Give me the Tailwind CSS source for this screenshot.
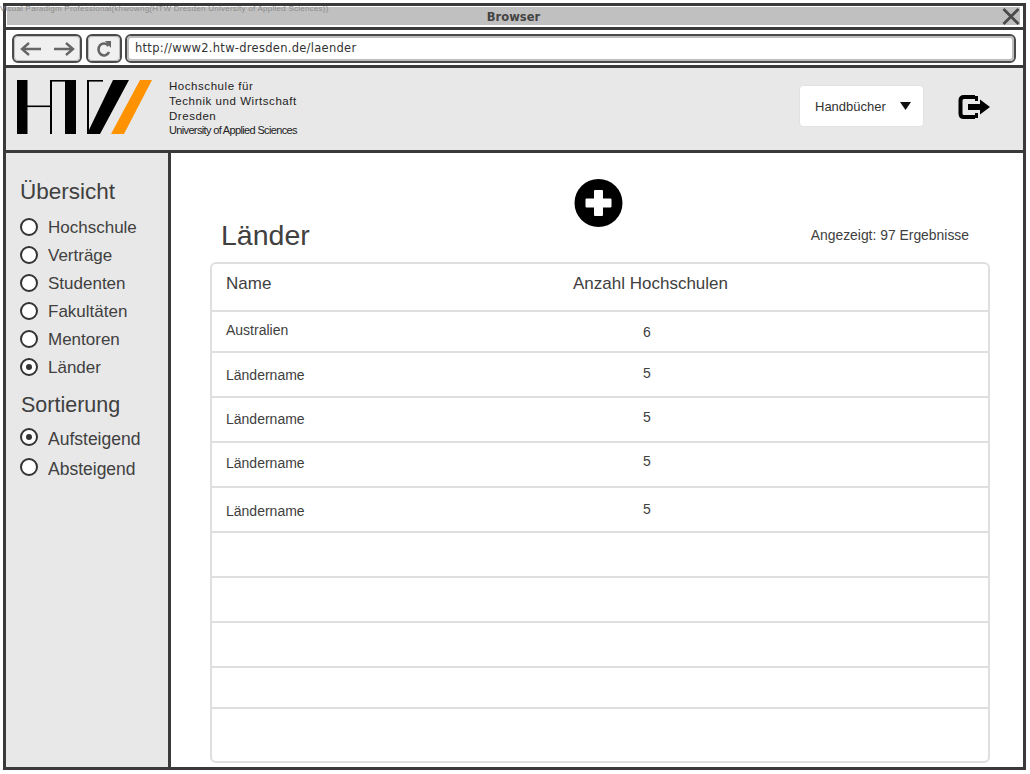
<!DOCTYPE html>
<html lang="de">
  <head>
    <meta charset="UTF-8" />
    <title>Browser</title>
    <script src="https://cdn.jsdelivr.net/npm/@tailwindcss/browser@4"></script>
  </head>
  <body class="bg-white font-['Liberation_Sans',Arial,sans-serif] text-[#404040]">
    <div class="relative w-[1030px] h-[774px] pt-[3px] pl-[3px] overflow-hidden">
      <!-- watermark over the title bar -->
      <p class="absolute z-10 left-[0px] top-[4px] text-[8px] leading-[9px] tracking-[0.25px] text-[#8c8c8c] whitespace-nowrap">Visual Paradigm Professional(khwowng(HTW Dresden University of Applied Sciences))</p>

      <div class="w-[1023px] h-[767px] border-[3px] border-[#3a3a3a] flex flex-col bg-white">
        <!-- title bar -->
        <div class="h-[24px] shrink-0 border-b-[3px] border-[#3a3a3a] pt-[1px] pb-[2px] pl-[1px] pr-[3px]">
          <div class="relative h-[18px] bg-[#c0c0c0] flex items-center justify-center pt-[3px]">
            <span class="font-['DejaVu_Sans',sans-serif] text-[11.5px] font-bold text-[#444]">Browser</span>
            <svg class="absolute right-[0px] top-[1px]" width="18" height="17" viewBox="0 0 18 17"><path d="M1.5 1 L16.5 16 M16.5 1 L1.5 16" stroke="#4a4a4a" stroke-width="2.8" fill="none"/></svg>
          </div>
        </div>

        <!-- toolbar -->
        <div class="h-[38px] shrink-0 border-b-[3px] border-[#3a3a3a] flex items-center pl-[6px] pr-[7px] pt-[2px]">
          <div class="w-[70px] h-[29px] rounded-[6px] border-2 border-[#4a4a4a] outline outline-1 -outline-offset-3 outline-[#bdbdbd] bg-[#f0f0f0] flex items-center justify-center gap-[9px]">
            <svg width="24" height="16" viewBox="0 0 24 16"><path d="M22 8 H3 M10 2 L3 8 L10 14" stroke="#666" stroke-width="2.4" fill="none"/></svg>
            <svg width="24" height="16" viewBox="0 0 24 16"><path d="M2 8 H21 M14 2 L21 8 L14 14" stroke="#666" stroke-width="2.4" fill="none"/></svg>
          </div>
          <div class="ml-[4px] w-[36px] h-[29px] rounded-[6px] border-2 border-[#4a4a4a] outline outline-1 -outline-offset-3 outline-[#bdbdbd] bg-[#f0f0f0] flex items-center justify-center">
            <svg width="16" height="18" viewBox="0 0 16 18"><path d="M12.5 6 A5.5 6 0 1 0 13 12" stroke="#666" stroke-width="2.6" fill="none"/><path d="M9 1 L15 1 L15 8 Z" fill="#666"/></svg>
          </div>
          <div class="ml-[3px] flex-1 h-[29px] rounded-[6px] border-2 border-[#4a4a4a] outline outline-2 -outline-offset-4 outline-[#bdbdbd] bg-white flex items-center pl-[8px] pt-[1px] font-['DejaVu_Sans',sans-serif] text-[11.5px] tracking-[0.28px] text-[#333]">http://www2.htw-dresden.de/laender</div>
        </div>

        <!-- header -->
        <div class="h-[85px] shrink-0 border-b-[3px] border-[#3a3a3a] bg-[#e8e8e8] flex items-center pl-[11px] pr-[32px] pb-[4px]">
          <svg class="shrink-0" width="136" height="54" viewBox="0 0 136 54">
            <rect x="0" y="0" width="10.5" height="54" fill="#000"/>
            <rect x="10" y="25.5" width="24" height="1.6" fill="#000"/>
            <rect x="33" y="0" width="2" height="54" fill="#000"/>
            <rect x="33" y="0" width="26" height="1.6" fill="#000"/>
            <rect x="48" y="0" width="11" height="54" fill="#000"/>
            <rect x="70" y="0" width="2" height="54" fill="#000"/>
            <rect x="70" y="0" width="16" height="1.6" fill="#000"/>
            <path d="M96 0 H112 L83 54 H70 Z" fill="#000"/>
            <path d="M123 0 H135 L107 54 H94 Z" fill="#ff9200"/>
          </svg>
          <div class="ml-[16px] text-[#222] leading-[14.7px] text-[11.5px] tracking-[0.55px] pt-[3px]">
            <p>Hochschule für</p>
            <p>Technik und Wirtschaft</p>
            <p>Dresden</p>
            <p class="text-[11px] tracking-[-0.65px]">University of Applied Sciences</p>
          </div>
          <div class="ml-auto mb-[2px] w-[125px] h-[42px] rounded-[4px] bg-white border border-[#e2e2e2] flex items-center pl-[15px] pt-[2px] text-[13px] text-[#333]">
            Handbücher
            <svg class="ml-[14px] -mt-[2px]" width="11" height="8" viewBox="0 0 11 8"><path d="M0 0 H11 L5.5 8 Z" fill="#111"/></svg>
          </div>
          <svg class="ml-[34px]" width="33" height="26" viewBox="0 0 33 26">
            <path d="M17 3 H6 Q2.5 3 2.5 6.5 V19.5 Q2.5 23 6 23 H17" stroke="#000" stroke-width="4" fill="none"/>
            <path d="M17 2 H20 V7 H17 Z M17 19 H20 V24 H17 Z" fill="#000"/>
            <path d="M10 10 H22 V5.5 L32 13 L22 20.5 V16 H10 Z" fill="#000"/>
          </svg>
        </div>

        <div class="flex-1 min-h-0 flex">
          <!-- sidebar -->
          <aside class="w-[165px] shrink-0 border-r-[3px] border-[#3a3a3a] bg-[#e8e8e8] pl-[14px] pt-[26px]">
            <h2 class="text-[22.5px] leading-[26px]">Übersicht</h2>
            <ul class="mt-[9px] text-[17px]">
              <li class="h-[28px] flex items-center gap-[10px]"><span class="w-[18px] h-[18px] -mt-[3px] rounded-full border-2 border-[#333] bg-white"></span>Hochschule</li>
              <li class="h-[28px] flex items-center gap-[10px]"><span class="w-[18px] h-[18px] -mt-[3px] rounded-full border-2 border-[#333] bg-white"></span>Verträge</li>
              <li class="h-[28px] flex items-center gap-[10px]"><span class="w-[18px] h-[18px] -mt-[3px] rounded-full border-2 border-[#333] bg-white"></span>Studenten</li>
              <li class="h-[28px] flex items-center gap-[10px]"><span class="w-[18px] h-[18px] -mt-[3px] rounded-full border-2 border-[#333] bg-white"></span>Fakultäten</li>
              <li class="h-[28px] flex items-center gap-[10px]"><span class="w-[18px] h-[18px] -mt-[3px] rounded-full border-2 border-[#333] bg-white"></span>Mentoren</li>
              <li class="h-[28px] flex items-center gap-[10px]"><span class="w-[18px] h-[18px] -mt-[3px] rounded-full border-2 border-[#333] bg-white flex items-center justify-center"><span class="w-[6px] h-[6px] rounded-full bg-[#333]"></span></span>Länder</li>
            </ul>
            <h2 class="mt-[10px] pl-[1px] text-[21.5px] leading-[26px]">Sortierung</h2>
            <ul class="mt-[6px] text-[17.5px]">
              <li class="h-[30px] flex items-center gap-[10px]"><span class="w-[18px] h-[18px] -mt-[4px] rounded-full border-2 border-[#333] bg-white flex items-center justify-center"><span class="w-[6px] h-[6px] rounded-full bg-[#333]"></span></span>Aufsteigend</li>
              <li class="h-[30px] flex items-center gap-[10px]"><span class="w-[18px] h-[18px] -mt-[4px] rounded-full border-2 border-[#333] bg-white"></span>Absteigend</li>
            </ul>
          </aside>

          <!-- main -->
          <main class="flex-1 min-w-0 pl-[39px] pr-[33px] pt-[26px]">
            <div class="flex justify-center pr-[4px]">
              <svg width="49" height="48" viewBox="0 0 49 48">
                <circle cx="24.5" cy="24" r="24" fill="#000"/>
                <path d="M20 12 Q20 11 21 11 H28 Q29 11 29 12 V19.5 H36.5 Q37.5 19.5 37.5 20.5 V27.5 Q37.5 28.5 36.5 28.5 H29 V36 Q29 37 28 37 H21 Q20 37 20 36 V28.5 H12.5 Q11.5 28.5 11.5 27.5 V20.5 Q11.5 19.5 12.5 19.5 H20 Z" fill="#fff"/>
              </svg>
            </div>
            <div class="flex items-center justify-between h-[36px] -mt-[10px] pl-[11px] pr-[21px]">
              <h1 class="text-[28.5px] leading-[36px]">Länder</h1>
              <span class="text-[13.9px]">Angezeigt: 97 Ergebnisse</span>
            </div>
            <div class="mt-[9px] w-[780px] h-[501px] border-2 border-[#dfdfdf] rounded-[6px] flex flex-col">
              <div class="h-[48px] shrink-0 border-b-2 border-[#dfdfdf] flex items-center text-[17px]">
                <span class="w-[361px] pl-[14px] pb-[7px]">Name</span>
                <span class="pb-[7px]">Anzahl Hochschulen</span>
              </div>
              <div class="h-[41px] shrink-0 border-b-2 border-[#dfdfdf] flex text-[14px]">
                <span class="w-[431px] pl-[14px] pt-[8px]">Australien</span>
                <span class="pt-[10px]">6</span>
              </div>
              <div class="h-[45px] shrink-0 border-b-2 border-[#dfdfdf] flex text-[14px]">
                <span class="w-[431px] pl-[14px] pt-[12px]">Ländername</span>
                <span class="pt-[10px]">5</span>
              </div>
              <div class="h-[45px] shrink-0 border-b-2 border-[#dfdfdf] flex text-[14px]">
                <span class="w-[431px] pl-[14px] pt-[11px]">Ländername</span>
                <span class="pt-[9px]">5</span>
              </div>
              <div class="h-[45px] shrink-0 border-b-2 border-[#dfdfdf] flex text-[14px]">
                <span class="w-[431px] pl-[14px] pt-[10px]">Ländername</span>
                <span class="pt-[8px]">5</span>
              </div>
              <div class="h-[45px] shrink-0 border-b-2 border-[#dfdfdf] flex text-[14px]">
                <span class="w-[431px] pl-[14px] pt-[13px]">Ländername</span>
                <span class="pt-[11px]">5</span>
              </div>
              <div class="h-[45px] shrink-0 border-b-2 border-[#dfdfdf]"></div>
              <div class="h-[45px] shrink-0 border-b-2 border-[#dfdfdf]"></div>
              <div class="h-[45px] shrink-0 border-b-2 border-[#dfdfdf]"></div>
              <div class="h-[41px] shrink-0 border-b-2 border-[#dfdfdf]"></div>
            </div>
          </main>
        </div>
      </div>
    </div>
  </body>
</html>
